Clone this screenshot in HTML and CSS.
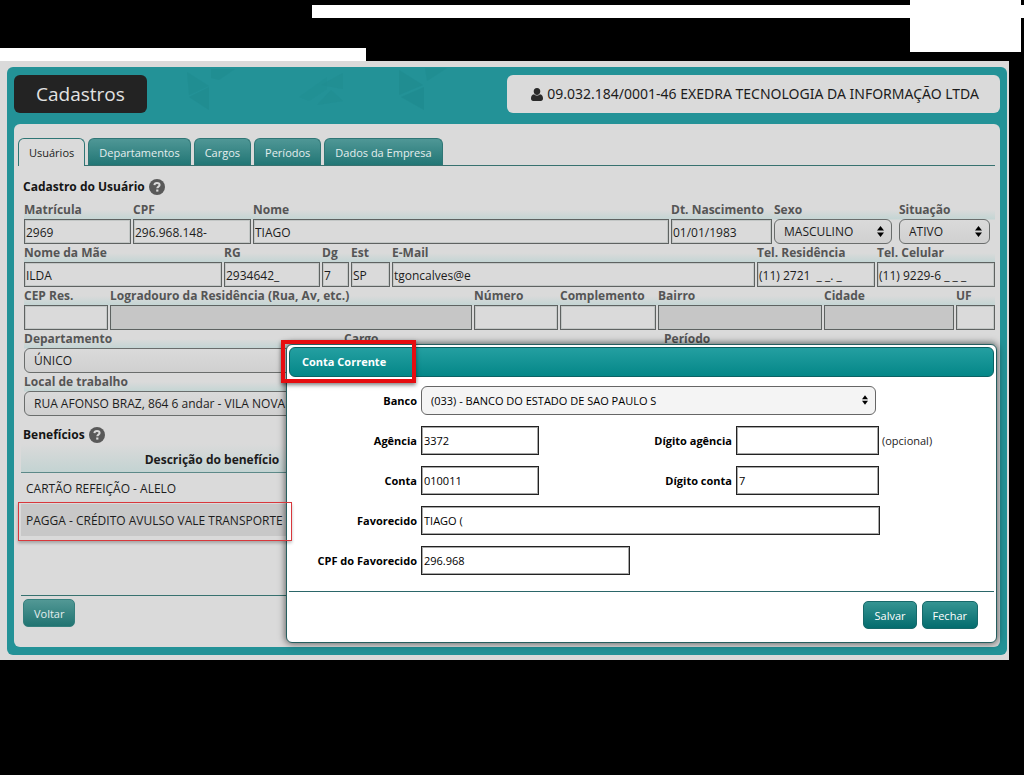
FILE: index.html
```html
<!DOCTYPE html>
<html lang="pt-BR">
<head>
<meta charset="utf-8">
<title>Cadastros</title>
<link rel="stylesheet" href="styles.css">
</head>
<body>
<div class="masthead">
  <div class="bar bar-upper"></div>
  <div class="bar bar-block"></div>
  <div class="bar bar-lower"></div>
</div>
<div class="page">
  <div class="frame">
    <svg class="pattern" width="340" height="50" viewBox="0 0 340 50" aria-hidden="true">
      <g fill="#1d878b">
        <path d="M58 2h24l-16 11-8-2z" opacity=".6"/><path d="M34 5l22 14-20 9z" opacity=".6"/><path d="M36 30l20-10v23z" opacity=".8"/>
        <path d="M146 30l28-20v12l-18 12z" opacity=".3"/><path d="M168 18l22-12v16z" opacity=".5"/><path d="M164 38l14-15 12 11z" opacity=".5"/>
        <path d="M246 3l24 15-24 10z" opacity=".8"/><path d="M248 30l23-10v23z" opacity=".9"/><path d="M272 1h22l-20 13z" opacity=".6"/>
      </g>
    </svg>
    <header class="top">
      <h1 class="title">Cadastros</h1>
      <div class="company">
        <svg width="12" height="13" viewBox="0 0 12 13" aria-hidden="true"><path fill="#2a2a2a" d="M6 0a3.3 3.5 0 0 1 3.3 3.5C9.300 5.400 7.800 7 6 7S2.700 5.400 2.700 3.500A3.300 3.500 0 0 1 6 0zM3 6.300C4.600 8 7.400 8 9 6.300c2.200.3 3 2.200 3 4.200 0 1.600-.8 2.500-2.200 2.500H2.200C.8 13 0 12.100 0 10.500c0-2 .8-3.900 3-4.200z"/></svg>
        <span>09.032.184/0001-46 EXEDRA TECNOLOGIA DA INFORMAÇÃO LTDA</span>
      </div>
    </header>
    <main class="panel">
      <nav class="tabs">
        <button class="tab active">Usuários</button>
        <button class="tab">Departamentos</button>
        <button class="tab">Cargos</button>
        <button class="tab">Períodos</button>
        <button class="tab">Dados da Empresa</button>
      </nav>
      <h2 class="section">Cadastro do Usuário
        <svg class="help" width="16" height="16" viewBox="0 0 16 16" aria-hidden="true"><circle cx="8" cy="8" r="8" fill="#595959"/><path d="M5.400 6.100C5.500 4.500 6.600 3.900 8 3.900s2.600.8 2.600 2.100c0 1.600-2.300 1.700-2.300 3.300" fill="none" stroke="#dadada" stroke-width="2"/><rect x="7.200" y="10.500" width="2.200" height="2.100" fill="#dadada"/></svg>
      </h2>
      <form class="form">
        <div class="row">
          <div class="field w107"><label for="mat">Matrícula</label><input id="mat" value="2969"></div>
          <div class="field w118"><label for="cpf">CPF</label><input id="cpf" value="296.968.148-"></div>
          <div class="field grow"><label for="nome">Nome</label><input id="nome" value="TIAGO"></div>
          <div class="field w101"><label for="nasc">Dt. Nascimento</label><input id="nasc" value="01/01/1983"></div>
          <div class="field w118"><label for="sexo">Sexo</label><div class="select"><select id="sexo"><option>MASCULINO</option></select><svg width="7" height="11" viewBox="0 0 7 11" aria-hidden="true"><path d="M3.500 0L7 4.500H0zM3.500 11L7 6.500H0z"/></svg></div></div>
          <div class="field status"><label for="sit">Situação</label><div class="select"><select id="sit"><option>ATIVO</option></select><svg width="7" height="11" viewBox="0 0 7 11" aria-hidden="true"><path d="M3.500 0L7 4.500H0zM3.500 11L7 6.500H0z"/></svg></div></div>
        </div>
        <div class="row">
          <div class="field w198"><label for="mae">Nome da Mãe</label><input id="mae" value="ILDA"></div>
          <div class="field w96"><label for="rg">RG</label><input id="rg" value="2934642_"></div>
          <div class="field w27"><label for="dg">Dg</label><input id="dg" value="7"></div>
          <div class="field w39"><label for="est">Est</label><input id="est" value="SP"></div>
          <div class="field grow"><label for="mail">E-Mail</label><input id="mail" value="tgoncalves@e"></div>
          <div class="field w118"><label for="tel">Tel. Residência</label><input id="tel" value="(11) 2721  _ _. _"></div>
          <div class="field w118"><label for="cel">Tel. Celular</label><input id="cel" value="(11) 9229-6 _ _ _"></div>
        </div>
        <div class="row">
          <div class="field w84"><label for="cep">CEP Res.</label><input id="cep"></div>
          <div class="field grow"><label for="rua">Logradouro da Residência (Rua, Av, etc.)</label><input id="rua" disabled></div>
          <div class="field w84"><label for="num">Número</label><input id="num"></div>
          <div class="field w96"><label for="comp">Complemento</label><input id="comp"></div>
          <div class="field w164"><label for="bairro">Bairro</label><input id="bairro" disabled></div>
          <div class="field w130"><label for="cidade">Cidade</label><input id="cidade" disabled></div>
          <div class="field w39"><label for="uf">UF</label><input id="uf"></div>
        </div>
        <div class="row">
          <div class="field w318"><label for="dep">Departamento</label><div class="select"><select id="dep"><option>ÚNICO</option></select></div></div>
          <div class="field w318"><label for="cargo">Cargo</label><div class="select"><select id="cargo"></select></div></div>
          <div class="field grow"><label for="per">Período</label><div class="select"><select id="per"></select></div></div>
        </div>
        <div class="row">
          <div class="field grow"><label for="local">Local de trabalho</label><div class="select"><select id="local"><option>RUA AFONSO BRAZ, 864 6 andar - VILA NOVA</option></select></div></div>
        </div>
      </form>
      <h2 class="section">Benefícios
        <svg class="help" width="16" height="16" viewBox="0 0 16 16" aria-hidden="true"><circle cx="8" cy="8" r="8" fill="#595959"/><path d="M5.400 6.100C5.500 4.500 6.600 3.900 8 3.900s2.600.8 2.600 2.100c0 1.600-2.300 1.700-2.300 3.300" fill="none" stroke="#dadada" stroke-width="2"/><rect x="7.200" y="10.500" width="2.200" height="2.100" fill="#dadada"/></svg>
      </h2>
      <div class="benefits">
        <table>
          <thead><tr><th class="desc">Descrição do benefício</th><th></th></tr></thead>
          <tbody>
            <tr><td>CARTÃO REFEIÇÃO - ALELO</td><td></td></tr>
            <tr class="hover"><td>PAGGA - CRÉDITO AVULSO VALE TRANSPORTE</td><td></td></tr>
          </tbody>
        </table>
      </div>
      <div class="footer"><button class="btn dim">Voltar</button></div>
    </main>
    <section class="modal" role="dialog" aria-labelledby="modal-title">
      <h2 class="modal-title" id="modal-title">Conta Corrente</h2>
      <div class="mark-title"></div>
      <form class="account">
        <div class="line"><label for="banco">Banco</label><div class="select bank"><select id="banco"><option>(033) - BANCO DO ESTADO DE SAO PAULO S</option></select><svg width="6" height="10" viewBox="0 0 7 11" aria-hidden="true"><path d="M3.500 0L7 4.500H0zM3.500 11L7 6.500H0z"/></svg></div></div>
        <div class="line"><label for="ag">Agência</label><input class="w118" id="ag" value="3372"><label class="second" for="dag">Dígito agência</label><input class="w143" id="dag"><span class="hint">(opcional)</span></div>
        <div class="line"><label for="conta">Conta</label><input class="w118" id="conta" value="010011"><label class="second" for="dconta">Dígito conta</label><input class="w143" id="dconta" value="7"></div>
        <div class="line"><label for="fav">Favorecido</label><input class="w459" id="fav" value="TIAGO ("></div>
        <div class="line"><label for="cpff">CPF do Favorecido</label><input class="w209" id="cpff" value="296.968"></div>
      </form>
      <div class="actions"><button class="btn">Salvar</button><button class="btn">Fechar</button></div>
    </section>
    <div class="mark-row"></div>
  </div>
</div>
</body>
</html>
```

FILE: styles.css
```css
* { box-sizing: border-box; }
body {
  margin: 0;
  background: #000;
  font-family: "Open Sans", "Noto Sans", sans-serif;
  font-size: 12px;
  color: #1c1c1c;
}
h1, h2 { margin: 0; font-size: 12px; }
input, select, button { font: inherit; color: inherit; margin: 0; }

.masthead {
  display: grid;
  grid-template-columns: 312px 54px 1fr 111px 3px;
  grid-template-rows: 5px 13px 30px 4px 9px;
}
.bar { background: #fff; }
.bar-upper { grid-area: 2 / 2 / 3 / 6; }
.bar-block { grid-area: 1 / 4 / 5 / 5; }
.bar-lower { grid-area: 4 / 1 / 6 / 3; }

.page {
  margin-right: 15px;
  padding: 6px 2px 5px 7px;
  background: #dadada;
}
.frame {
  position: relative;
  padding: 8px 7px;
  border-radius: 6px;
  background: #239297;
}
.pattern { position: absolute; left: 146px; top: 0; opacity: .5; }
.top {
  position: relative;
  display: flex;
  justify-content: space-between;
  margin-bottom: 11px;
}
.title {
  padding: 0 22px;
  border-radius: 6px;
  background: #232323;
  color: #e2e2e2;
  font-size: 19px;
  font-weight: 400;
  line-height: 38px;
}
.company {
  display: flex;
  align-items: center;
  gap: 4px;
  padding: 0 21px 0 24px;
  border-radius: 6px;
  background: #dadada;
  font-family: "Noto Sans", "Open Sans", sans-serif;
  font-size: 14px;
  line-height: 38px;
}
.panel {
  padding: 14px 5px 20px 4px;
  border-radius: 6px;
  background: #dadada;
}

.tabs {
  display: flex;
  gap: 3px;
  border-bottom: 1px solid #37716f;
}
.tab {
  height: 27px;
  padding: 0 10px;
  border: 1px solid #2f7675;
  border-bottom: 0;
  border-radius: 6px 6px 0 0;
  background: linear-gradient(#4f9796, #227675);
  color: #e4eeee;
  font-size: 11px;
}
.tab.active {
  height: 28px;
  margin-bottom: -1px;
  background: #dadada;
  color: #222;
}
.section {
  display: flex;
  align-items: center;
  gap: 4px;
  padding: 0 5px;
  line-height: 18px;
  color: #151515;
}
.tabs + .section { margin-top: 12px; }

.form { padding: 6px 0 0 6px; }
.row {
  display: flex;
  gap: 2px;
  padding-bottom: 1px;
  background: linear-gradient(#dadada 8px, #c4d5d4 17px, #dadada 18px);
}
.field { display: flex; flex-direction: column; }
.field label {
  height: 17px;
  line-height: 16px;
  font-weight: 700;
  color: #555;
  white-space: nowrap;
}
.field input {
  width: 100%;
  height: 25px;
  padding: 1px 1px 0;
  border: 1px solid #5e6261;
  outline: 1px solid #c2c6c5;
  outline-offset: -2px;
  border-radius: 0;
  background: #dadada;
}
.field input:disabled { background: #c6c6c6; }
.grow { flex: 1; min-width: 0; }
.status { width: 91px; margin: 0 5px; }
.w27 { width: 27px; }
.w39 { width: 39px; }
.w84 { width: 84px; }
.w96 { width: 96px; }
.w101 { width: 101px; }
.w107 { width: 107px; }
.w118 { width: 118px; }
.w130 { width: 130px; }
.w143 { width: 143px; }
.w164 { width: 164px; }
.w198 { width: 198px; }
.w209 { width: 209px; }
.w318 { width: 318px; }
.w459 { width: 459px; }

.select { position: relative; }
.select select {
  width: 100%;
  height: 25px;
  padding: 0 9px;
  border: 1px solid #6a6d6c;
  border-radius: 6px;
  appearance: none;
  background: linear-gradient(#dadada, #d0d0d0);
}
.select svg {
  position: absolute;
  right: 8px;
  top: 7px;
  pointer-events: none;
}

.form + .section { margin-top: 9px; }
.benefits {
  height: 152px;
  margin: 0 2px 0 3px;
  border-bottom: 1px solid #37716f;
}
table { width: 100%; border-collapse: collapse; table-layout: fixed; }
th {
  height: 28px;
  padding: 3px 0 0;
  border-bottom: 1px solid #5c8988;
  background: linear-gradient(#dadada, #c3d3d2);
}
.desc { width: 382px; }
td { height: 32px; padding: 0 5px; }
.hover td { background: #c8c8c8; }
.footer { padding: 3px 5px 0; }

.btn {
  height: 28px;
  padding: 0 10px;
  border: 1px solid #17696a;
  border-radius: 5px;
  background: linear-gradient(#359492, #046c6e);
  color: #fff;
  font-size: 11px;
}
.btn.dim {
  border-color: #357f7d;
  background: linear-gradient(#529895, #217472);
  color: #e4eeee;
}

.modal {
  position: absolute;
  left: 279px;
  right: 10px;
  top: 277px;
  padding: 2px 2px 13px;
  border: 1px solid #265e5f;
  border-radius: 6px;
  background: #fff;
  box-shadow: 0 0 7px 1px rgba(0, 0, 0, .55);
  color: #000;
}
.modal-title {
  padding: 0 12px;
  border: 1px solid #0b6264;
  border-radius: 6px;
  background: linear-gradient(#249fa1, #048788);
  color: #fff;
  font-size: 11px;
  line-height: 28px;
}
.mark-title {
  position: absolute;
  left: -6px;
  top: -5px;
  width: 135px;
  height: 43px;
  border: 4px solid #e60d10;
  box-shadow: 0 2px 4px rgba(0, 0, 0, .5);
}
.account {
  display: flex;
  flex-direction: column;
  gap: 11px;
  padding: 9px 0 16px;
  border-bottom: 1px solid #2b6669;
  font-size: 11px;
}
.line { display: flex; align-items: center; }
.line label {
  width: 128px;
  margin-right: 4px;
  text-align: right;
  font-weight: 700;
}
.line .second { width: 193px; }
.line input {
  height: 29px;
  padding: 0 2px;
  border: 1px solid #222;
  outline: 1px solid #a8a8a8;
  outline-offset: -2px;
  background: #fff;
}
.bank { width: 455px; }
.bank select {
  height: 29px;
  border-color: #666;
  background: #f4f4f4;
}
.bank svg { top: 9px; }
.hint { margin-left: 3px; color: #222; }
.actions {
  display: flex;
  justify-content: flex-end;
  gap: 5px;
  padding: 9px 16px 0;
}

.mark-row {
  position: absolute;
  left: 11px;
  top: 435px;
  width: 274px;
  height: 39px;
  border: 1px solid #d8383c;
  box-shadow: 0 2px 3px rgba(0, 0, 0, .25);
}
```
